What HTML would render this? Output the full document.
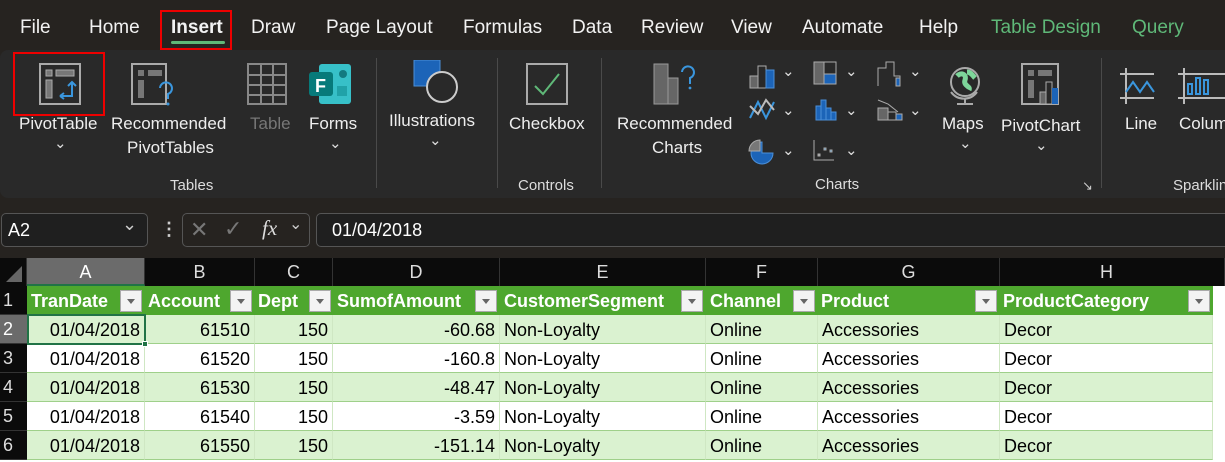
<!DOCTYPE html><html><head><meta charset="utf-8"><style>
*{margin:0;padding:0;box-sizing:border-box}
body{width:1225px;height:462px;overflow:hidden;background:#262320;font-family:"Liberation Sans",sans-serif;position:relative;color:#fff}
.a{position:absolute;white-space:nowrap}
.tab{top:17px;font-size:19px;color:#f2f2f2}
.rb{position:absolute;left:0;top:50px;width:1240px;height:148px;background:#292929;border-radius:8px}
.lbl{font-size:17px;color:#eee;text-align:center}
.grp{font-size:15px;color:#ddd}
.sep{position:absolute;top:58px;width:1px;height:130px;background:#4a4a4a}
.chev{font-size:15px;color:#ddd}
.cell{position:absolute;height:29px;font-size:18px;line-height:30px;color:#000;padding:0 4px;overflow:hidden;border-right:1px solid #cfe7c3;border-bottom:1px solid #9fd08a}
.hd{position:absolute;top:258px;height:28px;background:#0b0b0b;color:#ddd;font-size:18px;line-height:28px;text-align:center;border-right:1px solid #333}
.rh{position:absolute;left:0;width:27px;height:29px;background:#0b0b0b;color:#ddd;font-size:18px;line-height:29px;padding-left:3px;border-bottom:1px solid #333}
.th{position:absolute;top:286px;height:29px;background:#4ea72e;color:#fff;font-weight:bold;font-size:18px;line-height:29px;padding-left:3px}
.dd{position:absolute;top:290px;width:22px;height:22px;background:#f3f3f3;border:1px solid #aaa}
.dd:after{content:"";position:absolute;left:6px;top:8px;border:4px solid transparent;border-top:5px solid #666}
</style></head><body>
<div class="a tab" style="left:20px">File</div>
<div class="a tab" style="left:89px">Home</div>
<div class="a tab" style="left:171px;font-weight:bold">Insert</div>
<div class="a" style="left:160px;top:10px;width:72px;height:40px;border:2px solid #e00"></div>
<div class="a" style="left:171px;top:41px;width:54px;height:3px;background:#5fb878;border-radius:2px"></div>
<div class="a tab" style="left:251px">Draw</div>
<div class="a tab" style="left:326px">Page Layout</div>
<div class="a tab" style="left:463px">Formulas</div>
<div class="a tab" style="left:572px">Data</div>
<div class="a tab" style="left:641px">Review</div>
<div class="a tab" style="left:731px">View</div>
<div class="a tab" style="left:802px">Automate</div>
<div class="a tab" style="left:919px">Help</div>
<div class="a tab" style="left:991px;color:#5fb878">Table Design</div>
<div class="a tab" style="left:1132px;color:#5fb878">Query</div>

<div class="rb"></div>
<div class="a" style="left:13px;top:52px;width:92px;height:64px;border:2px solid #e00"></div>
<svg class="a" style="left:36px;top:62px" width="48" height="46"><rect x="4" y="2" width="40" height="40" fill="none" stroke="#aaa" stroke-width="2"/><rect x="10" y="8" width="6" height="6" fill="#777" stroke="#aaa"/><rect x="20" y="8" width="18" height="6" fill="#777" stroke="#aaa"/><rect x="10" y="18" width="6" height="18" fill="#777" stroke="#aaa"/><path d="M24 34h12V20M32 24l4-4 4 4M24 34l4-3M24 34l4 3" stroke="#3a96dd" stroke-width="2" fill="none"/></svg>
<div class="a lbl" style="left:19px;top:114px">PivotTable</div>
<div class="a chev" style="left:54px;top:134px">⌄</div>
<svg class="a" style="left:130px;top:62px" width="48" height="46"><rect x="2" y="2" width="34" height="40" fill="none" stroke="#aaa" stroke-width="2"/><rect x="8" y="8" width="6" height="6" fill="#777"/><rect x="18" y="8" width="14" height="6" fill="#777"/><rect x="8" y="18" width="6" height="18" fill="#777"/><path d="M30 26a6 6 0 1 1 8 6v5" stroke="#3a96dd" stroke-width="2" fill="none"/><circle cx="38" cy="42" r="1.5" fill="#3a96dd"/></svg>
<div class="a lbl" style="left:111px;top:114px">Recommended</div>
<div class="a lbl" style="left:127px;top:138px">PivotTables</div>
<svg class="a" style="left:246px;top:62px" width="46" height="46"><rect x="2" y="2" width="38" height="40" fill="none" stroke="#888" stroke-width="2"/><path d="M2 13h38M2 23h38M2 33h38M15 2v40M27 2v40" stroke="#888" stroke-width="2"/></svg>
<div class="a lbl" style="left:250px;top:114px;color:#777">Table</div>
<svg class="a" style="left:307px;top:62px" width="48" height="46"><rect x="12" y="2" width="32" height="40" rx="3" fill="#37c0c8"/><circle cx="36" cy="12" r="4" fill="#137a80"/><rect x="30" y="24" width="10" height="10" fill="#20a2a8"/><rect x="2" y="10" width="24" height="24" rx="3" fill="#077a7a"/><text x="8" y="30" font-size="18" font-weight="bold" fill="#fff" font-family="Liberation Sans">F</text></svg>
<div class="a lbl" style="left:309px;top:114px">Forms</div>
<div class="a chev" style="left:329px;top:134px">⌄</div>
<div class="a grp" style="left:170px;top:177px">Tables</div>
<div class="sep" style="left:376px"></div>
<svg class="a" style="left:410px;top:60px" width="50" height="50"><rect x="4" y="0" width="26" height="26" fill="#1c64b8" stroke="#4b8fd8"/><circle cx="32" cy="27" r="15" fill="#292929" stroke="#ccc" stroke-width="2"/></svg>
<div class="a lbl" style="left:389px;top:111px">Illustrations</div>
<div class="a chev" style="left:429px;top:131px">⌄</div>
<div class="sep" style="left:497px"></div>
<svg class="a" style="left:525px;top:62px" width="46" height="46"><rect x="2" y="2" width="40" height="40" fill="none" stroke="#aaa" stroke-width="2"/><path d="M10 24l8 8 16-20" stroke="#5fb878" stroke-width="2" fill="none"/></svg>
<div class="a lbl" style="left:509px;top:114px">Checkbox</div>
<div class="a grp" style="left:518px;top:177px">Controls</div>
<div class="sep" style="left:601px"></div>
<svg class="a" style="left:652px;top:60px" width="50" height="46"><rect x="2" y="4" width="14" height="40" fill="#666" stroke="#999"/><rect x="16" y="18" width="10" height="26" fill="#666" stroke="#999"/><path d="M30 12a6 6 0 1 1 8 6v6" stroke="#3a96dd" stroke-width="2" fill="none"/><circle cx="38" cy="28" r="1.4" fill="#3a96dd"/></svg>
<div class="a lbl" style="left:617px;top:114px">Recommended</div>
<div class="a lbl" style="left:652px;top:138px">Charts</div>
<svg class="a" style="left:748px;top:60px" width="190" height="110" stroke="#aaa" fill="none">
<rect x="2" y="16" width="8" height="12" fill="#666"/><rect x="10" y="6" width="8" height="22"/><rect x="18" y="10" width="8" height="18" fill="#1c64b8" stroke="#4b8fd8"/>
<path d="M2 58l8-16 8 16 8-16" stroke="#3a96dd" stroke-width="2"/><path d="M2 46l8 8 8-14 8 10" stroke="#bbb" stroke-width="2"/>
<path d="M14 82a11 11 0 1 0 11 11h-11z" fill="#1c64b8" stroke="#4b8fd8"/><path d="M12 80a11 11 0 0 0-11 11h11z" fill="#777"/>
<rect x="66" y="2" width="22" height="22"/><rect x="66" y="2" width="10" height="22" fill="#666"/><rect x="76" y="14" width="12" height="10" fill="#1c64b8"/>
<rect x="68" y="46" width="5" height="14" fill="#1c64b8" stroke="#4b8fd8"/><rect x="73" y="40" width="5" height="20" fill="#1c64b8" stroke="#4b8fd8"/><rect x="78" y="48" width="5" height="12" fill="#1c64b8" stroke="#4b8fd8"/><rect x="83" y="52" width="5" height="8" fill="#1c64b8" stroke="#4b8fd8"/>
<path d="M66 80v20h20"/><rect x="70" y="94" width="2" height="2" fill="#aaa"/><rect x="76" y="88" width="2" height="2" fill="#3a96dd"/><rect x="82" y="90" width="2" height="2" fill="#3a96dd"/>
<path d="M130 26V8h8V2h8v14h6v10" /><rect x="148" y="18" width="4" height="8" fill="#1c64b8"/>
<path d="M130 40l10 4 10 8"/><rect x="130" y="48" width="10" height="12" fill="#666"/><rect x="140" y="52" width="8" height="8"/><rect x="148" y="54" width="6" height="6" fill="#1c64b8"/>
</svg>
<div class="a chev" style="left:782px;top:62px">⌄</div><div class="a chev" style="left:782px;top:101px">⌄</div><div class="a chev" style="left:782px;top:141px">⌄</div>
<div class="a chev" style="left:845px;top:62px">⌄</div><div class="a chev" style="left:845px;top:101px">⌄</div><div class="a chev" style="left:845px;top:141px">⌄</div>
<div class="a chev" style="left:909px;top:62px">⌄</div><div class="a chev" style="left:909px;top:101px">⌄</div>
<svg class="a" style="left:945px;top:62px" width="40" height="46"><circle cx="20" cy="20" r="14" fill="#292929" stroke="#aaa" stroke-width="2"/><path d="M12 14c4-4 10-2 8 4s6 6 4 10M22 10c4 0 6 4 8 6" stroke="#7dd69a" stroke-width="5" fill="none"/><path d="M6 30a16 16 0 0 0 26 0M20 36v6M12 42h16" stroke="#aaa" stroke-width="2" fill="none"/></svg>
<div class="a lbl" style="left:942px;top:114px">Maps</div>
<div class="a chev" style="left:959px;top:134px">⌄</div>
<svg class="a" style="left:1020px;top:62px" width="46" height="46"><rect x="2" y="2" width="36" height="40" fill="none" stroke="#aaa" stroke-width="2"/><rect x="8" y="8" width="6" height="6" fill="#777"/><rect x="18" y="8" width="14" height="6" fill="#777"/><rect x="8" y="18" width="6" height="18" fill="#777"/><rect x="20" y="30" width="6" height="12" fill="#666" stroke="#aaa"/><rect x="26" y="20" width="6" height="22" fill="#292929" stroke="#aaa"/><rect x="32" y="26" width="6" height="16" fill="#1c64b8"/></svg>
<div class="a lbl" style="left:1001px;top:116px">PivotChart</div>
<div class="a chev" style="left:1035px;top:136px">⌄</div>
<div class="a grp" style="left:815px;top:176px">Charts</div>
<div class="a" style="left:1082px;top:178px;font-size:13px;color:#ccc">↘</div>
<div class="sep" style="left:1101px"></div>
<svg class="a" style="left:1120px;top:66px" width="105" height="40"><path d="M0 8h34M0 32h34M6 2v36" stroke="#bbb" stroke-width="2"/><path d="M6 26l7-10 7 10 7-10 7 10" stroke="#3a96dd" stroke-width="2" fill="none"/><path d="M58 8h50M58 32h50M64 2v36" stroke="#bbb" stroke-width="2"/><rect x="68" y="18" width="4" height="10" fill="none" stroke="#3a96dd" stroke-width="2"/><rect x="76" y="12" width="4" height="16" fill="none" stroke="#3a96dd" stroke-width="2"/><rect x="84" y="14" width="4" height="14" fill="none" stroke="#3a96dd" stroke-width="2"/></svg>
<div class="a lbl" style="left:1125px;top:114px">Line</div>
<div class="a lbl" style="left:1179px;top:114px">Column</div>
<div class="a grp" style="left:1173px;top:177px">Sparklines</div>

<div class="a" style="left:1px;top:213px;width:147px;height:34px;border:1px solid #555;border-radius:5px;background:#1f1f1f"></div>
<div class="a" style="left:8px;top:220px;font-size:18px">A2</div>
<div class="a" style="left:122px;top:214px;font-size:18px;color:#ccc">⌄</div>
<div class="a" style="left:160px;top:219px;font-size:18px;color:#ccc;font-weight:bold">⋮</div>
<div class="a" style="left:182px;top:213px;width:128px;height:34px;border:1px solid #555;border-radius:5px"></div>
<div class="a" style="left:190px;top:217px;font-size:22px;color:#777">✕</div>
<div class="a" style="left:224px;top:216px;font-size:22px;color:#777">✓</div>
<div class="a" style="left:262px;top:216px;font-size:21px;color:#ddd;font-family:'Liberation Serif',serif;font-style:italic">fx</div>
<div class="a" style="left:289px;top:214px;font-size:16px;color:#ccc">⌄</div>
<div class="a" style="left:316px;top:213px;width:920px;height:34px;border:1px solid #555;border-radius:5px;background:#1f1f1f"></div>
<div class="a" style="left:332px;top:220px;font-size:18px">01/04/2018</div>

<div class="a" style="left:0;top:258px;width:1225px;height:204px;background:#fff"></div>
<div class="hd" style="left:0;width:27px;background:#0b0b0b"><svg width="22" height="22" style="margin-top:4px"><path d="M20 4v16H4z" fill="#666"/></svg></div>
<div class="hd" style="left:27px;width:118px;background:#6b6b6b;color:#fff;border-bottom:2px solid #217346">A</div>
<div class="hd" style="left:145px;width:110px">B</div>
<div class="hd" style="left:255px;width:78px">C</div>
<div class="hd" style="left:333px;width:167px">D</div>
<div class="hd" style="left:500px;width:206px">E</div>
<div class="hd" style="left:706px;width:112px">F</div>
<div class="hd" style="left:818px;width:182px">G</div>
<div class="hd" style="left:1000px;width:225px;text-align:left;padding-left:100px">H</div>

<div class="rh" style="top:286px">1</div><div class="rh" style="top:315px;background:#6b6b6b;color:#fff">2</div><div class="rh" style="top:344px">3</div><div class="rh" style="top:373px">4</div><div class="rh" style="top:402px">5</div><div class="rh" style="top:431px">6</div>

<div class="th" style="left:27px;width:1186px"></div>
<div class="a" style="left:31px;top:287px;font-size:18px;line-height:29px;font-weight:bold">TranDate</div><div class="dd" style="left:120px"></div>
<div class="a" style="left:148px;top:287px;font-size:18px;line-height:29px;font-weight:bold">Account</div><div class="dd" style="left:230px"></div>
<div class="a" style="left:258px;top:287px;font-size:18px;line-height:29px;font-weight:bold">Dept</div><div class="dd" style="left:309px"></div>
<div class="a" style="left:337px;top:287px;font-size:18px;line-height:29px;font-weight:bold">SumofAmount</div><div class="dd" style="left:475px"></div>
<div class="a" style="left:504px;top:287px;font-size:18px;line-height:29px;font-weight:bold">CustomerSegment</div><div class="dd" style="left:681px"></div>
<div class="a" style="left:710px;top:287px;font-size:18px;line-height:29px;font-weight:bold">Channel</div><div class="dd" style="left:793px"></div>
<div class="a" style="left:821px;top:287px;font-size:18px;line-height:29px;font-weight:bold">Product</div><div class="dd" style="left:975px"></div>
<div class="a" style="left:1003px;top:287px;font-size:18px;line-height:29px;font-weight:bold">ProductCategory</div><div class="dd" style="left:1188px"></div>

<div id="rows"></div>
<script>
var d=[["61510","-60.68"],["61520","-160.8"],["61530","-48.47"],["61540","-3.59"],["61550","-151.14"]];
var cols=[[27,118,"r"],[145,110,"r"],[255,78,"r"],[333,167,"r"],[500,206,"l"],[706,112,"l"],[818,182,"l"],[1000,213,"l"]];
var h="";
d.forEach(function(r,i){var top=315+i*29;var bg=i%2==0?"#daf2d0":"#fff";
var v=["01/04/2018",r[0],"150",r[1],"Non-Loyalty","Online","Accessories","Decor"];
cols.forEach(function(c,j){h+='<div class="cell" style="left:'+c[0]+'px;top:'+top+'px;width:'+c[1]+'px;background:'+bg+';text-align:'+(c[2]=="r"?"right":"left")+'">'+v[j]+'</div>';});});
h+='<div class="a" style="left:27px;top:314px;width:119px;height:31px;border:2px solid #217346"></div><div class="a" style="left:142px;top:341px;width:6px;height:6px;background:#217346;border:1px solid #fff"></div>';
document.getElementById("rows").innerHTML=h;
</script>
</body></html>
